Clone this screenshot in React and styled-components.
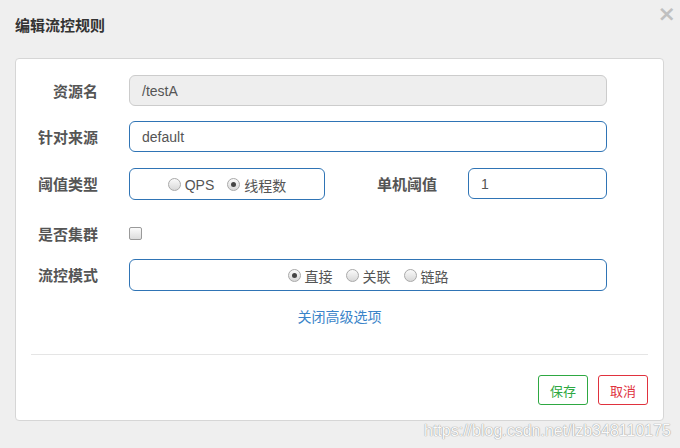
import React from "react"
import styled, { createGlobalStyle } from "styled-components"

const GlobalStyle = createGlobalStyle`
    html, body {
        margin: 0;
        padding: 0;
        background: #efefef;
        font-family: "Liberation Sans", "Noto Sans CJK SC", sans-serif;
    }
`

const Modal = styled.div`
    width: 680px;
    height: 448px;
    box-sizing: border-box;
    padding: 0 16px 0 15px;
    display: flex;
    flex-direction: column;
`

const Header = styled.div`
    height: 58px;
    display: flex;
    align-items: flex-start;
    justify-content: space-between;
`

const Title = styled.h4`
    margin: 17px 0 0 0;
    font-size: 15px;
    font-weight: bold;
    color: #333;
    line-height: 18px;
`

const Close = styled.span`
    margin: 3px -12px 0 0;
    font-size: 22px;
    font-weight: bold;
    color: #c0c0c0;
    line-height: 22px;
    font-family: "DejaVu Sans", sans-serif;
`

const Panel = styled.div`
    background: #fff;
    border: 1px solid #d6d6d6;
    border-radius: 4px;
    padding: 16px 15px 15px 15px;
    box-sizing: border-box;
    height: 363px;
    display: flex;
    flex-direction: column;
`

const Row = styled.div`
    display: flex;
    align-items: center;
    height: 31px;
    margin-top: ${p => p.$top || 0}px;
`

const Label = styled.label`
    width: ${p => p.$width || 67}px;
    margin-right: 31px;
    text-align: right;
    font-size: 15px;
    font-weight: bold;
    color: #555;
    flex-shrink: 0;
`

const Input = styled.div`
    box-sizing: border-box;
    height: 31px;
    flex: 0 0 478px;
    padding: 0 12px;
    display: flex;
    align-items: center;
    font-size: 14px;
    color: #555;
    border: 1px solid ${p => (p.$disabled ? "#ccc" : "#2f74b5")};
    background: ${p => (p.$disabled ? "#eee" : "#fff")};
    border-radius: 6px;
`

const FlexInput = styled(Input)`
    flex: 1;
    margin-right: 41px;
`

const RadioBox = styled.div`
    box-sizing: border-box;
    height: 32px;
    width: ${p => p.$width}px;
    border: 1px solid #2f74b5;
    border-radius: 6px;
    display: flex;
    align-items: center;
    justify-content: center;
    gap: 13px;
    font-size: 14px;
    color: #555;
    padding-top: 2px;
`

const RadioItem = styled.span`
    display: inline-flex;
    align-items: center;
    gap: 4px;
`

const Circle = styled.span`
    width: 11px;
    height: 11px;
    border-radius: 50%;
    border: 1px solid #a9a9a9;
    background: linear-gradient(#fafafa, #d8d8d8);
    display: inline-flex;
    align-items: center;
    justify-content: center;

    &::after {
        content: "";
        width: 5px;
        height: 5px;
        border-radius: 50%;
        background: ${p => (p.$checked ? "#444" : "transparent")};
    }
`

const Check = styled.span`
    width: 11px;
    height: 11px;
    border: 1px solid #9a9a9a;
    border-radius: 2px;
    background: linear-gradient(#fbfbfb, #dcdcdc);
`

const LinkRow = styled.div`
    text-align: center;
    margin-top: 17px;
    font-size: 14px;
    color: #3a84c9;
    line-height: 20px;
`

const Divider = styled.div`
    margin-top: 27px;
    border-top: 1px solid #e5e5e5;
`

const Footer = styled.div`
    margin-top: 20px;
    display: flex;
    justify-content: flex-end;
    gap: 10px;
`

const Button = styled.button`
    width: 50px;
    height: 30px;
    background: #fff;
    border: 1px solid ${p => p.$color};
    color: ${p => p.$color};
    border-radius: 3px;
    font-size: 13px;
    font-family: "Liberation Sans", "Noto Sans CJK SC", sans-serif;
    padding: 0;
`

const Watermark = styled.div`
    text-align: right;
    margin: 1px -7px 0 0;
    font-size: 16px;
    color: #fafafa;
    text-shadow: 0 0 1px #8f8f8f, 0 0 1px #a8a8a8;
`

function Radio({ checked, children }) {
    return (
        <RadioItem>
            <Circle $checked={checked} />
            {children}
        </RadioItem>
    )
}

function App() {
    return (
        <Modal>
            <GlobalStyle />
            <Header>
                <Title>编辑流控规则</Title>
                <Close>×</Close>
            </Header>
            <Panel>
                <Row>
                    <Label>资源名</Label>
                    <Input $disabled>/testA</Input>
                </Row>
                <Row $top={15}>
                    <Label>针对来源</Label>
                    <Input>default</Input>
                </Row>
                <Row $top={16}>
                    <Label>阈值类型</Label>
                    <RadioBox $width={196}>
                        <Radio>QPS</Radio>
                        <Radio checked>线程数</Radio>
                    </RadioBox>
                    <Label $width={112}>单机阈值</Label>
                    <FlexInput>1</FlexInput>
                </Row>
                <Row $top={20}>
                    <Label>是否集群</Label>
                    <Check />
                </Row>
                <Row $top={12}>
                    <Label>流控模式</Label>
                    <RadioBox $width={478}>
                        <Radio checked>直接</Radio>
                        <Radio>关联</Radio>
                        <Radio>链路</Radio>
                    </RadioBox>
                </Row>
                <LinkRow>关闭高级选项</LinkRow>
                <Divider />
                <Footer>
                    <Button $color="#2ea842">保存</Button>
                    <Button $color="#e0323e">取消</Button>
                </Footer>
            </Panel>
            <Watermark>https://blog.csdn.net/lzb348110175</Watermark>
        </Modal>
    )
}

export default App
